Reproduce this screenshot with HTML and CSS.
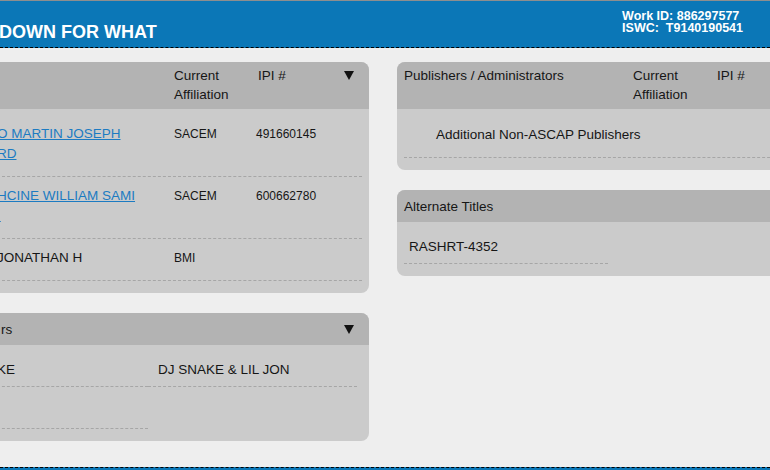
FILE: index.html
```html
<!DOCTYPE html>
<html lang="en">
<head>
<meta charset="utf-8">
<title>DOWN FOR WHAT</title>
<link rel="stylesheet" href="styles.css">
</head>
<body>
<header class="topbar">
  <h1 class="title">DOWN FOR WHAT</h1>
  <div class="ids">
    <div>Work ID: 886297577</div>
    <div>ISWC:&nbsp; T9140190541</div>
  </div>
</header>
<main class="content">
  <div class="col">
    <section class="panel panel-left">
      <div class="panel-head head-tall writers-head">
        <span></span>
        <span>Current Affiliation</span>
        <span>IPI #</span>
        <span class="caret"></span>
      </div>
      <div class="panel-body writers-body">
        <div class="row writers-row">
          <a class="name-link" href="#">O MARTIN JOSEPH<br>RD</a>
          <span class="small">SACEM</span>
          <span class="small">491660145</span>
        </div>
        <div class="row writers-row">
          <a class="name-link" href="#">HCINE WILLIAM SAMI<br>&nbsp;</a>
          <span class="small">SACEM</span>
          <span class="small">600662780</span>
        </div>
        <div class="row writers-row">
          <span>JONATHAN H</span>
          <span class="small">BMI</span>
          <span class="small"></span>
        </div>
      </div>
    </section>
    <section class="panel panel-left">
      <div class="panel-head head-short performers-head">
        <span class="perf-label">rs</span>
        <span class="caret"></span>
      </div>
      <div class="panel-body performers-body">
        <div class="cell">KE</div>
        <div class="cell cell-b">DJ SNAKE &amp; LIL JON</div>
        <div class="cell">&nbsp;</div>
      </div>
    </section>
  </div>
  <div class="col">
    <section class="panel panel-right">
      <div class="panel-head head-tall publishers-head">
        <span>Publishers / Administrators</span>
        <span>Current Affiliation</span>
        <span>IPI #</span>
      </div>
      <div class="panel-body publishers-body">
        <div class="row pub-row">Additional Non-ASCAP Publishers</div>
      </div>
    </section>
    <section class="panel panel-right">
      <div class="panel-head head-short titles-head">
        <span>Alternate Titles</span>
      </div>
      <div class="panel-body titles-body">
        <div class="cell title-cell">RASHRT-4352</div>
      </div>
    </section>
  </div>
</main>
<footer class="bottombar"></footer>
</body>
</html>
```
FILE: styles.css
```css
html, body {
  margin: 0;
  padding: 0;
}
body {
  height: 470px;
  overflow: hidden;
  display: flex;
  flex-direction: column;
  background: #eeeeee;
  font-family: "Liberation Sans", Arial, sans-serif;
  color: #161616;
}

/* top bar */
.topbar {
  flex: none;
  height: 46px;
  border-top: 1px solid #8e8e8e;
  border-bottom: 1px dashed #000;
  background: #0b77b7;
  color: #fff;
  display: flex;
  justify-content: space-between;
  align-items: flex-start;
}
.title {
  margin: 21px 0 0 -1px;
  font-size: 18px;
  font-weight: bold;
  line-height: 20px;
}
.ids {
  margin: 8.5px 27px 0 0;
  font-size: 12.5px;
  font-weight: bold;
  line-height: 12.5px;
  white-space: nowrap;
}

/* content */
.content {
  flex: 1;
  display: grid;
  grid-template-columns: 381px 393px;
  column-gap: 28px;
  align-items: start;
  margin-left: -12px;
  padding-top: 14px;
}
.col {
  display: flex;
  flex-direction: column;
  gap: 20px;
}
.panel {
  background: #cbcbcb;
  border-radius: 8px;
  overflow: hidden;
  font-size: 13.5px;
}
.panel-head {
  background: #b3b3b3;
  line-height: 19px;
  color: #161616;
}
.head-tall {
  padding: 4px 15px 5px 9px;
}
.head-short {
  padding: 7px 15px 6px 9px;
}
.panel-right .panel-head {
  padding-left: 7px;
}
.caret {
  width: 0;
  height: 0;
  margin-top: 5px;
  border-left: 5px solid transparent;
  border-right: 5px solid transparent;
  border-top: 9px solid #111;
}

/* writers */
.writers-head {
  display: grid;
  grid-template-columns: 177px 84px 1fr 10px;
  align-items: start;
}
.writers-body {
  padding: 6px 7px 12px 9px;
}
.row {
  border-bottom: 1px dashed #a6a6a6;
  line-height: 20px;
}
.writers-row {
  display: grid;
  grid-template-columns: 177px 82px 1fr;
  padding: 9px 0 12px;
  align-items: start;
}
.name-link {
  color: #1c7bc2;
  text-decoration: underline;
}
.small {
  font-size: 12px;
}

/* performers */
.performers-head {
  display: flex;
  justify-content: space-between;
  align-items: flex-start;
}
.perf-label {
  margin-left: 4px;
}
.performers-body {
  display: grid;
  grid-template-columns: 151px 209px;
  padding: 0 12px 12px 9px;
}
.cell {
  padding: 15px 0 6px;
  line-height: 20px;
  border-bottom: 1px dashed #a6a6a6;
}
.cell-b {
  padding-left: 10px;
}

/* publishers */
.publishers-head {
  display: grid;
  grid-template-columns: 229px 84px 1fr;
}
.publishers-body {
  padding: 7px 0 12px 7px;
}
.pub-row {
  padding: 9px 0 12px 32px;
}

/* alternate titles */
.titles-body {
  display: grid;
  grid-template-columns: 204px 1fr;
  padding: 0 0 12px 7px;
}
.title-cell {
  padding-left: 5px;
}

/* bottom bar */
.bottombar {
  flex: none;
  height: 2px;
  border-top: 1px dashed #000;
  background: #0b77b7;
}
```
